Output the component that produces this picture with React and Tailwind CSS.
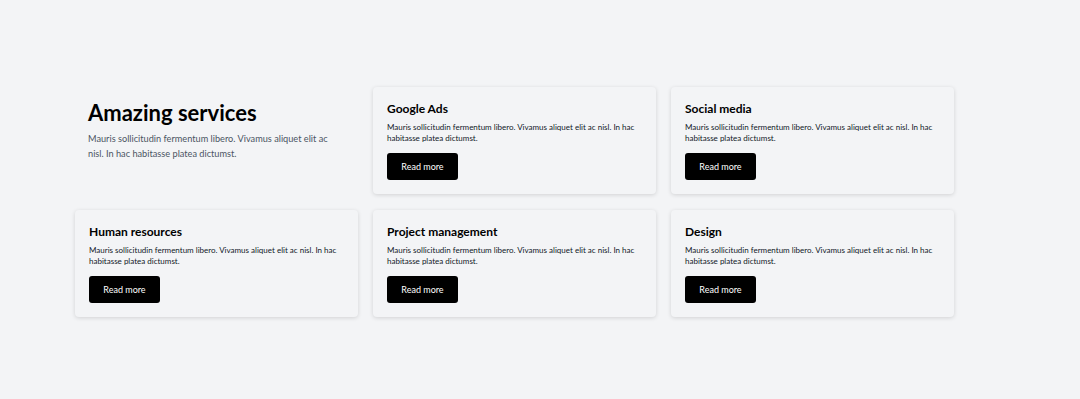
import React from "react";

const text =
  "Mauris sollicitudin fermentum libero. Vivamus aliquet elit ac nisl. In hac habitasse platea dictumst.";

const services = [
  "Google Ads",
  "Social media",
  "Human resources",
  "Project management",
  "Design",
];

function ServiceCard({ title }) {
  return (
    <div className="bg-[#f3f4f6] rounded-[4px] shadow-[0_1px_4px_rgba(0,0,0,0.14)] px-[14px] pt-[13px] pb-[14px]">
      <h3 className="text-[12px] leading-[18px] font-bold text-black">
        {title}
      </h3>
      <p className="mt-[4px] text-[8px] leading-[11px] text-[#111827]">
        {text}
      </p>
      <button className="mt-[9px] h-[27px] w-[71px] rounded-[3px] bg-black text-[9px] text-white">
        Read more
      </button>
    </div>
  );
}

export default function App() {
  return (
    <div className="min-h-[399px] bg-[#f3f4f6] pt-[87px] pl-[75px] font-['Lato',sans-serif]">
      <div className="grid w-[879px] grid-cols-3 gap-x-[15px] gap-y-[16px]">
        {/* Intro */}
        <div className="px-[13px] pt-[11px]">
          <h2 className="text-[22px] leading-[30px] font-bold text-black">
            Amazing services
          </h2>
          <p className="mt-[3px] text-[9.2px] leading-[15px] text-[#4b5563]">
            {text}
          </p>
        </div>

        {services.map((s) => (
          <ServiceCard key={s} title={s} />
        ))}
      </div>
    </div>
  );
}
